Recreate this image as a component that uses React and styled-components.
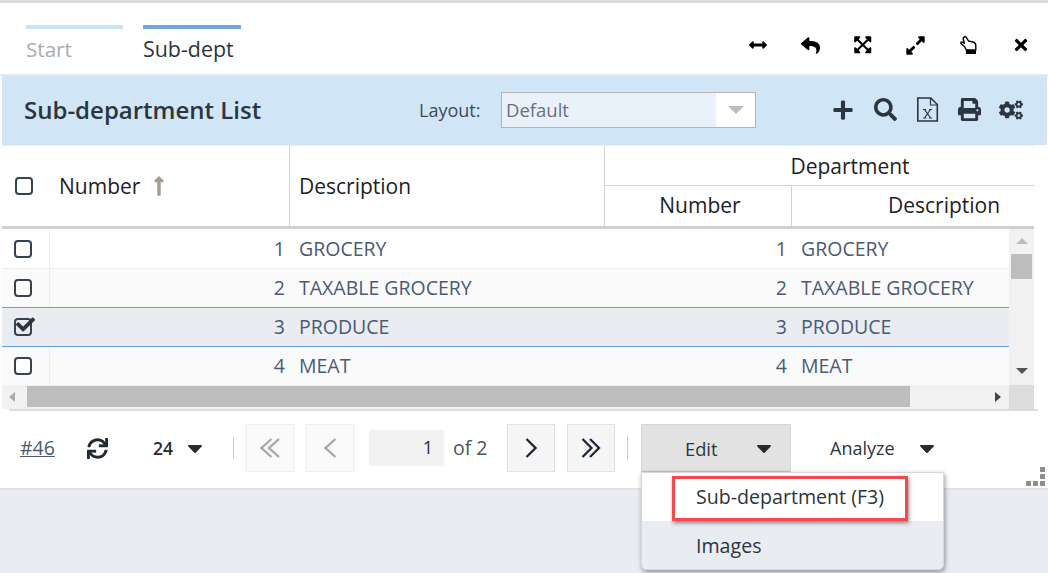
import React from "react";
import styled, { createGlobalStyle } from "styled-components";
import { FaArrowsAltH, FaReply, FaExpandAlt, FaTimes, FaPlus, FaSearch, FaPrint, FaCogs, FaSync, FaCaretDown, FaCheck, FaLongArrowAltUp, FaExpandArrowsAlt } from "react-icons/fa";

const Global = createGlobalStyle`
  html, body { margin: 0; padding: 0; background: #e9ecf1; overflow: hidden; }
  body { font-family: "Open Sans", "Liberation Sans", sans-serif; }
  * { box-sizing: border-box; }
`;
const Page = styled.div`height: 573px; width: 1048px; overflow: hidden; border-top: 3px solid #dcdcdc; position: relative;`;
const Panel = styled.div`background: #fff; height: 487px; border-bottom: 2px solid #e2e2e2; display: flex; flex-direction: column;`;
const TabBar = styled.div`height: 73px; display: flex; align-items: flex-start; padding: 22px 0 0 26px; gap: 20px; border-bottom: 2px solid #e8e8e8;`;
const Tab = styled.div`
  width: ${p => p.$w}px; border-top: 4px solid ${p => p.$active ? "#72a9dd" : "#cbe3f6"};
  color: ${p => p.$active ? "#2c3540" : "#a9abad"}; font-size: ${p => p.$active ? 21.4 : 20.6}px; line-height: 28px; padding-top: 6px; white-space: nowrap;
`;
const TabIcons = styled.div`margin-left: auto; display: flex; align-items: center; height: 40px; color: #000; padding-right: 1px;`;
const TIcon = styled.span`display: flex; justify-content: center; align-items: center; width: 52.6px; font-size: ${p => p.$s || 18}px;`;
const Band = styled.div`
  margin: 0 1px 0 2px; height: 69px; background: #d0e5f6; display: flex; align-items: center; padding: 0 0 2px 22px;
`;
const Title = styled.div`font-size: 24px; font-weight: 600; color: #2c3540; width: 395px; white-space: nowrap;`;
const LayoutLabel = styled.div`font-size: 18px; color: #3f4955; width: 82px;`;
const Select = styled.div`width: 255px; height: 36px; border: 1px solid #b4b4b4; background: #fff; display: flex;`;
const SelectValue = styled.div`width: 214px; background: #e9f1fa; color: #66717d; font-size: 18.5px; line-height: 34px; padding-left: 4px;`;
const SelectArrow = styled.div`flex: 1; display: flex; align-items: center; justify-content: center;`;
const Tri = styled.div`width: 0; height: 0; border-left: 8px solid transparent; border-right: 8px solid transparent; border-top: 8px solid #bcbcbc;`;
const BandIcons = styled.div`display: flex; align-items: center; margin-left: 66px; color: #2c3540;`;
const BIcon = styled.span`display: flex; justify-content: center; align-items: center; width: 42px; font-size: ${p => p.$s || 22}px;`;

const Table = styled.div`margin: 0 14px 0 2px; font-size: 21px;`;
const Head = styled.div`
  height: 84px; border-top: 1px solid #e9ecf1; border-bottom: 3px solid #d0d0d0; display: grid;
  grid-template-columns: 288px 315px 1fr; color: #1d2126;
`;
const HeadFirst = styled.div`display: flex; align-items: center; border-right: 1px solid #d4d4d4;`;
const CheckWrap = styled.div`width: 48px; display: flex; justify-content: center; padding-right: 5px;`;
const Box = styled.span`
  width: 18px; height: 18px; border: 2px solid #36424f; border-radius: 4px; display: block; position: relative; background: ${p => p.$sel ? "transparent" : "#fff"};
`;
const Tick = styled(FaCheck)`position: absolute; left: 0; top: -5px; font-size: 19px; color: #2c3540;`;
const HeadNum = styled.div`margin-left: 9px; display: flex; align-items: center; gap: 8px;`;
const Sort = styled(FaLongArrowAltUp)`color: #a79c90; font-size: 22px;`;
const HeadDesc = styled.div`display: flex; align-items: center; padding-left: 9px; border-right: 1px solid #d4d4d4;`;
const Group = styled.div`display: flex; flex-direction: column; overflow: hidden;`;
const GroupTitle = styled.div`height: 40px; line-height: 41px; text-align: center; padding-left: 61px; border-bottom: 1px solid #d4d4d4;`;
const SubHead = styled.div`flex: 1; display: grid; grid-template-columns: 187px 1fr; align-items: stretch;`;
const SubNum = styled.div`text-align: center; line-height: 38px; border-right: 1px solid #d4d4d4; padding-left: 4px;`;
const SubDesc = styled.div`padding-left: 96px; white-space: nowrap; line-height: 38px;`;

const BodyWrap = styled.div`display: flex; height: 156px;`;
const Rows = styled.div`width: 1007px;`;
const Row = styled.div`
  height: ${p => p.$h}px; display: grid; grid-template-columns: 48px 240px 315px 187px 1fr; align-items: center; color: #4a5a78; line-height: 38px; font-size: 19.5px;
  background: ${p => p.$sel ? "#e9ecf1" : p.$alt ? "#fafafa" : "#fff"};
  border-style: solid; border-width: ${p => p.$sel ? "1px 0" : p.$flush ? "0" : "0 0 1px"};
  border-color: ${p => p.$sel ? "#5fa2dd" : "#ececec"};
`;
const RowCheck = styled.div`display: flex; justify-content: center; height: 100%; align-items: center; padding-right: 5px; border-right: 1px solid ${p => p.$sel ? "transparent" : "#ececec"};`;
const NumCell = styled.div`text-align: right; padding-right: 5px;`;
const TextCell = styled.div`padding-left: 9px; white-space: nowrap;`;
const VBar = styled.div`width: 25px; background: #f1f1f1; display: flex; flex-direction: column; align-items: center;`;
const ArrowUp = styled.div`margin-top: 9px; width: 0; height: 0; border-left: 6px solid transparent; border-right: 6px solid transparent; border-bottom: 6px solid #bdbdbd;`;
const VThumb = styled.div`margin-top: 10px; width: 21px; height: 25px; background: #bdbdbd;`;
const ArrowDown = styled.div`margin-top: auto; margin-bottom: 11px; width: 0; height: 0; border-left: 6px solid transparent; border-right: 6px solid transparent; border-top: 6px solid #555;`;
const HBar = styled.div`height: 24px; display: flex; background: #f1f1f1;`;
const HLeft = styled.div`width: 25px; display: flex; align-items: center; justify-content: center; padding-right: 5px;`;
const ArrowL = styled.div`width: 0; height: 0; border-top: 5px solid transparent; border-bottom: 5px solid transparent; border-right: 6px solid #aaa;`;
const HThumb = styled.div`width: 883px; height: 21px; margin-top: 1px; background: #bdbdbd;`;
const HRight = styled.div`width: 99px; display: flex; align-items: center; justify-content: flex-end; padding-right: 8px;`;
const ArrowR = styled.div`width: 0; height: 0; border-top: 5px solid transparent; border-bottom: 5px solid transparent; border-left: 6px solid #444;`;
const Corner = styled.div`flex: 1; background: #dcdcdc;`;

const Footer = styled.div`
  margin: 0 10px 0 9px; border-top: 2px solid #dcdcdc; flex: 1; display: flex; align-items: flex-start; padding-top: 13px; position: relative; font-size: 18px;
`;
const Count = styled.a`width: 67px; margin-left: 11px; color: #4a5a78; text-decoration: underline; line-height: 48px; font-size: 19.5px;`;
const Refresh = styled.span`width: 21px; height: 48px; display: flex; align-items: center; color: #232b33; font-size: 21px;`;
const PageSize = styled.div`margin-left: 45px; width: 54px; display: flex; justify-content: space-between; align-items: center; height: 48px; color: #232b33; font-weight: 600; font-size: 17.5px;`;
const Caret = styled(FaCaretDown)`font-size: 24px; color: #232b33;`;
const Sep = styled.div`width: 1px; height: 22px; margin: 13px ${p => p.$r}px 0 ${p => p.$l}px; background: #ccc;`;
const PagerBtn = styled.div`
  width: 48px; height: 48px; margin-right: ${p => p.$mr}px; display: flex; align-items: center; justify-content: center;
  border: 1px solid ${p => p.$off ? "#eeeeee" : "#e2e2e2"}; background: ${p => p.$off ? "#fafafa" : "#f5f5f5"}; color: ${p => p.$off ? "#a4a8ad" : "#1f2a38"};
`;
const PageInput = styled.div`width: 75px; height: 36px; margin: 6px 9px 0 0; background: #f1f1f1; border: 1px solid #f3f3f3; border-bottom: 2px solid #f3f3f3; color: #232b33; text-align: right; padding-right: 10px; line-height: 33px;`;
const OfText = styled.div`width: 54px; line-height: 48px; color: #4a5560; font-size: 19.5px; white-space: nowrap;`;
const MenuWrap = styled.div`position: relative; width: 150px; height: 48px;`;
const EditBtn = styled.div`
  height: 48px; background: #e2e2e2; border: 1px solid #d6d6d6; border-bottom-color: #c8c8c8; display: flex; align-items: center; color: #2c3540;
  padding-left: 43px; font-size: 18.3px;
`;
const EditCaret = styled(Caret)`margin-left: 35px;`;
const AnalyzeBtn = styled.div`margin-left: 39px; height: 48px; display: flex; align-items: center; color: #2c3540; font-size: 18px;`;
const AnalyzeCaret = styled(Caret)`margin-left: 20px;`;
const Menu = styled.div`
  position: absolute; top: 48px; left: 0; width: 303px; height: 98px; border: 1px solid #d8d8d8; background: #e9ecf1; border-radius: 0 0 5px 5px;
  box-shadow: 1px 2px 5px rgba(0,0,0,.4); font-size: 19.6px; z-index: 3;
`;
const MenuItem = styled.div`height: ${p => p.$h}px; line-height: ${p => p.$h}px; padding-left: 54px; color: #2c3540; background: ${p => p.$on ? "#fff" : "transparent"}; white-space: nowrap; position: relative;`;
const Highlight = styled.div`position: absolute; left: 30px; top: 3px; width: 236px; height: 45px; border: 3px solid #f34a4f; box-shadow: 1px 2px 4px rgba(0,0,0,.45);`;
const Grip = styled.div`position: absolute; right: -7px; bottom: 2px; display: grid; grid-template-columns: repeat(3, 5px); grid-auto-rows: 5px; gap: 2px;`;
const Dot = styled.span`background: ${p => p.$on ? "#8e8e8e" : "transparent"};`;

const rows = [
  { n: 1, d: "GROCERY", h: 40 },
  { n: 2, d: "TAXABLE GROCERY", h: 38, alt: true, flush: true },
  { n: 3, d: "PRODUCE", h: 40, sel: true },
  { n: 4, d: "MEAT", h: 38, alt: true, flush: true },
];

const ExcelIcon = () => (
  <svg width="23" height="25" viewBox="0 0 23 25" fill="none" stroke="#2c3540" strokeWidth="1.6">
    <path d="M1.8 1h13l6.5 6.5V24H1.8z" />
    <path d="M14.5 1v7h7" strokeWidth="1.2" />
    <path d="M7 12.5h3M13 12.5h3M7.2 21h3M13 21h3M8.5 12.5l6 8.5M14.5 12.5l-6 8.5" strokeWidth="1.2" />
  </svg>
);

const HandIcon = () => (
  <svg width="17" height="19" viewBox="0 0 17 19" fill="none" stroke="#000" strokeWidth="1.4" strokeLinejoin="round">
    <path d="M4 1.2C5 .2 6 .8 6.6 1.8L8.5 5 13 6c2 .5 2.8 2 2.8 3.5V14H6.2L4.5 10.5 1.2 7.8C.5 6.8 1 5.8 2 6L4.5 7.5 3.2 3C3 2.2 3.4 1.6 4 1.2Z" />
    <rect x="6" y="14" width="10" height="4" fill="#000" stroke="none" />
  </svg>
);

const Chevron = ({ dir, double }) => {
  const tip = dir === "left" ? [1.5, 11.5] : [10.5, 1.5];
  return (
    <svg width={double ? 20 : 12} height="20" viewBox={`0 0 ${double ? 20 : 12} 20`} fill="none" stroke="currentColor" strokeWidth="2.3">
      <polyline points={`${tip[1]},1 ${tip[0]},10 ${tip[1]},19`} />
      {double && <polyline points={`${tip[1] + 7.5},1 ${tip[0] + 7.5},10 ${tip[1] + 7.5},19`} />}
    </svg>
  );
};

export default function App() {
  return (
    <Page>
      <Global />
      <Panel>
        <TabBar>
          <Tab $w={97}>Start</Tab>
          <Tab $w={98} $active>Sub-dept</Tab>
          <TabIcons>
            <TIcon $s={18}><FaArrowsAltH /></TIcon>
            <TIcon $s={19}><FaReply /></TIcon>
            <TIcon $s={19.5}><FaExpandArrowsAlt /></TIcon>
            <TIcon $s={21}><FaExpandAlt /></TIcon>
            <TIcon><HandIcon /></TIcon>
            <TIcon $s={18}><FaTimes /></TIcon>
          </TabIcons>
        </TabBar>
        <Band>
          <Title>Sub-department List</Title>
          <LayoutLabel>Layout:</LayoutLabel>
          <Select>
            <SelectValue>Default</SelectValue>
            <SelectArrow><Tri /></SelectArrow>
          </Select>
          <BandIcons>
            <BIcon $s={22}><FaPlus /></BIcon>
            <BIcon $s={23}><FaSearch /></BIcon>
            <BIcon><ExcelIcon /></BIcon>
            <BIcon $s={23}><FaPrint /></BIcon>
            <BIcon $s={24}><FaCogs /></BIcon>
          </BandIcons>
        </Band>
        <Table>
          <Head>
            <HeadFirst>
              <CheckWrap><Box /></CheckWrap>
              <HeadNum>Number <Sort /></HeadNum>
            </HeadFirst>
            <HeadDesc>Description</HeadDesc>
            <Group>
              <GroupTitle>Department</GroupTitle>
              <SubHead>
                <SubNum>Number</SubNum>
                <SubDesc>Description</SubDesc>
              </SubHead>
            </Group>
          </Head>
          <BodyWrap>
            <Rows>
              {rows.map(r => (
                <Row key={r.n} $h={r.h} $alt={r.alt} $sel={r.sel} $flush={r.flush}>
                  <RowCheck $sel={r.sel}><Box $sel={r.sel}>{r.sel && <Tick />}</Box></RowCheck>
                  <NumCell>{r.n}</NumCell>
                  <TextCell>{r.d}</TextCell>
                  <NumCell>{r.n}</NumCell>
                  <TextCell>{r.d}</TextCell>
                </Row>
              ))}
            </Rows>
            <VBar>
              <ArrowUp />
              <VThumb />
              <ArrowDown />
            </VBar>
          </BodyWrap>
          <HBar>
            <HLeft><ArrowL /></HLeft>
            <HThumb />
            <HRight><ArrowR /></HRight>
            <Corner />
          </HBar>
        </Table>
        <Footer>
          <Count>#46</Count>
          <Refresh><FaSync /></Refresh>
          <PageSize>24 <Caret /></PageSize>
          <Sep $l={26} $r={12} />
          <PagerBtn $off $mr={12}><Chevron dir="left" double /></PagerBtn>
          <PagerBtn $off $mr={15}><Chevron dir="left" /></PagerBtn>
          <PageInput>1</PageInput>
          <OfText>of 2</OfText>
          <PagerBtn $mr={12}><Chevron dir="right" /></PagerBtn>
          <PagerBtn $mr={12}><Chevron dir="right" double /></PagerBtn>
          <Sep $l={0} $r={13} />
          <MenuWrap>
            <EditBtn>Edit <EditCaret /></EditBtn>
            <Menu>
              <MenuItem $on $h={48}>Sub-department (F3)<Highlight /></MenuItem>
              <MenuItem $h={49}>Images</MenuItem>
            </Menu>
          </MenuWrap>
          <AnalyzeBtn>Analyze <AnalyzeCaret /></AnalyzeBtn>
          <Grip>
            <Dot /><Dot /><Dot $on />
            <Dot /><Dot /><Dot $on />
            <Dot $on /><Dot $on /><Dot $on />
          </Grip>
        </Footer>
      </Panel>
    </Page>
  );
}
